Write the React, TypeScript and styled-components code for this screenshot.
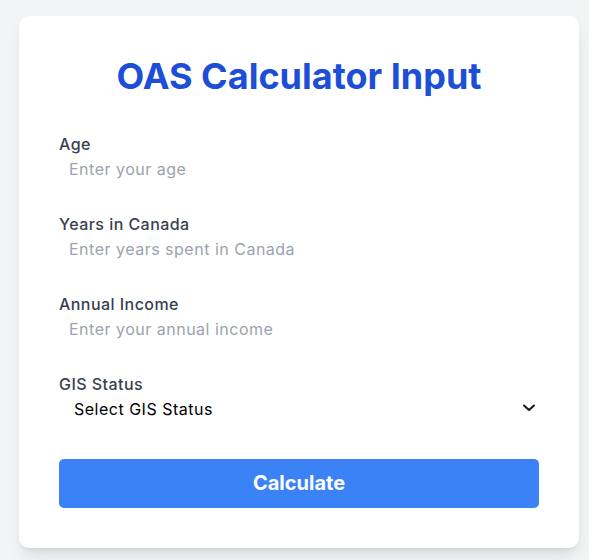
import React from "react";
import styled, { createGlobalStyle } from "styled-components";

const GlobalStyle = createGlobalStyle`
  html, body {
    margin: 0;
    padding: 0;
    background: #f3f4f6;
    font-family: Inter, "Noto Sans", sans-serif;
  }
  * { box-sizing: border-box; }
`;

const Page = styled.div`
  min-height: 560px;
  padding: 16px 0 0 19px;
`;

const Card = styled.form`
  width: 560px;
  background: #ffffff;
  border-radius: 10px;
  padding: 40px;
  box-shadow: 0 10px 15px -3px rgba(0, 0, 0, 0.1), 0 4px 6px -4px rgba(0, 0, 0, 0.1);
  display: flex;
  flex-direction: column;
`;

const Title = styled.h1`
  margin: 0 0 36px;
  font-size: 36px;
  line-height: 40px;
  font-weight: 700;
  color: #1d4ed8;
  text-align: center;
`;

const Field = styled.div<{ $gap: number }>`
  display: flex;
  flex-direction: column;
  margin-bottom: ${(p) => p.$gap}px;
`;

const Label = styled.label`
  display: block;
  font-size: 16px;
  line-height: 24px;
  font-weight: 500;
  letter-spacing: 0.45px;
  color: #374151;
`;

const Input = styled.input`
  font-family: Inter, "Noto Sans", sans-serif;
  font-size: 16px;
  line-height: 24px;
  letter-spacing: 0.5px;
  height: 26px;
  padding: 0 8px 0 9px;
  border: 1px solid transparent;
  background: transparent;
  color: #111827;
  outline: none;
  &::placeholder {
    color: #9ca3af;
  }
`;

const SelectWrap = styled.div`
  position: relative;
  height: 27px;
`;

const Select = styled.select`
  appearance: none;
  -webkit-appearance: none;
  width: 100%;
  height: 26px;
  font-family: Inter, "Noto Sans", sans-serif;
  font-size: 16px;
  line-height: 24px;
  letter-spacing: 0.5px;
  color: #000000;
  background: transparent;
  border: 1px solid transparent;
  padding: 0 0 0 14px;
  outline: none;
`;

const Chevron = styled.svg`
  position: absolute;
  right: 4px;
  top: 8px;
  pointer-events: none;
`;

const Button = styled.button`
  width: 100%;
  border: none;
  border-radius: 5px;
  background: #3b82f6;
  color: #ffffff;
  font-family: Inter, "Noto Sans", sans-serif;
  font-weight: 700;
  font-size: 20px;
  line-height: 29px;
  padding: 10px 0;
  cursor: pointer;
`;

export default function App() {
  return (
    <>
      <GlobalStyle />
      <Page>
        <Card onSubmit={(e) => e.preventDefault()}>
          <Title>OAS Calculator Input</Title>
          <Field $gap={30}>
            <Label htmlFor="age">Age</Label>
            <Input id="age" type="number" placeholder="Enter your age" />
          </Field>
          <Field $gap={30}>
            <Label htmlFor="years">Years in Canada</Label>
            <Input id="years" type="number" placeholder="Enter years spent in Canada" />
          </Field>
          <Field $gap={30}>
            <Label htmlFor="income">Annual Income</Label>
            <Input id="income" type="number" placeholder="Enter your annual income" />
          </Field>
          <Field $gap={36}>
            <Label htmlFor="gis">GIS Status</Label>
            <SelectWrap>
              <Select id="gis" defaultValue="">
                <option value="">Select GIS Status</option>
                <option value="yes">Receiving GIS</option>
                <option value="no">Not receiving GIS</option>
              </Select>
              <Chevron width="12" height="8" viewBox="0 0 12 8">
                <path d="M1 1.5 L6 6 L11 1.5" fill="none" stroke="#111827" strokeWidth="2" strokeLinecap="round" strokeLinejoin="round" />
              </Chevron>
            </SelectWrap>
          </Field>
          <Button type="submit">Calculate</Button>
        </Card>
      </Page>
    </>
  );
}
